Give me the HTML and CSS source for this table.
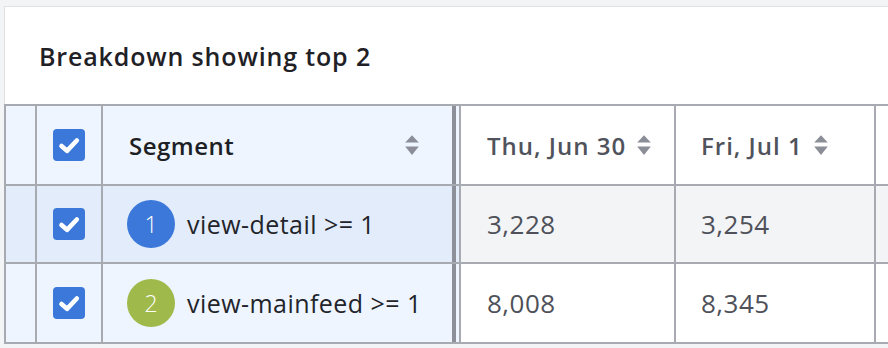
FILE: index.html
```html
<!DOCTYPE html>
<html>
<head>
<meta charset="utf-8">
<link rel="stylesheet" href="styles.css">
</head>
<body>
<div class="card">
  <div class="title">Breakdown showing top 2</div>
  <div class="table">
    <div class="row head">
      <div class="cell c-a"></div>
      <div class="cell c-b">
        <svg class="check" width="32" height="32" viewBox="0 0 32 32"><rect width="32" height="32" rx="4" fill="#3b78d9"/><path d="M8.5 17 L14 21.8 L23.8 11.5" fill="none" stroke="#fff" stroke-width="4.6" stroke-linecap="round" stroke-linejoin="round"/></svg>
      </div>
      <div class="cell c-seg seg-head">
        <span class="hlabel">Segment</span>
        <svg class="sort" width="14" height="20" viewBox="0 0 14 20"><path d="M7 0.3 L13.8 7.6 H0.2 Z" fill="#8b8e97"/><path d="M0.2 11.6 H13.8 L7 20 Z" fill="#8b8e97"/></svg>
      </div>
      <div class="cell c-thu date-head">
        <span>Thu, Jun 30</span>
        <svg class="sort" width="14" height="20" viewBox="0 0 14 20"><path d="M7 0.3 L13.8 7.6 H0.2 Z" fill="#8b8e97"/><path d="M0.2 11.6 H13.8 L7 20 Z" fill="#8b8e97"/></svg>
      </div>
      <div class="cell c-fri date-head">
        <span>Fri, Jul 1</span>
        <svg class="sort" width="14" height="20" viewBox="0 0 14 20"><path d="M7 0.3 L13.8 7.6 H0.2 Z" fill="#8b8e97"/><path d="M0.2 11.6 H13.8 L7 20 Z" fill="#8b8e97"/></svg>
      </div>
      <div class="cell c-rest"></div>
    </div>
    <div class="row r1">
      <div class="cell c-a"></div>
      <div class="cell c-b">
        <svg class="check" width="32" height="32" viewBox="0 0 32 32"><rect width="32" height="32" rx="4" fill="#3b78d9"/><path d="M8.5 17 L14 21.8 L23.8 11.5" fill="none" stroke="#fff" stroke-width="4.6" stroke-linecap="round" stroke-linejoin="round"/></svg>
      </div>
      <div class="cell c-seg seg-body">
        <span class="badge blue">1</span>
        <span class="segname">view-detail &gt;= 1</span>
      </div>
      <div class="cell c-thu num">3,228</div>
      <div class="cell c-fri num">3,254</div>
      <div class="cell c-rest"></div>
    </div>
    <div class="row r2">
      <div class="cell c-a"></div>
      <div class="cell c-b">
        <svg class="check" width="32" height="32" viewBox="0 0 32 32"><rect width="32" height="32" rx="4" fill="#3b78d9"/><path d="M8.5 17 L14 21.8 L23.8 11.5" fill="none" stroke="#fff" stroke-width="4.6" stroke-linecap="round" stroke-linejoin="round"/></svg>
      </div>
      <div class="cell c-seg seg-body">
        <span class="badge green">2</span>
        <span class="segname">view-mainfeed &gt;= 1</span>
      </div>
      <div class="cell c-thu num">8,008</div>
      <div class="cell c-fri num">8,345</div>
      <div class="cell c-rest"></div>
    </div>
  </div>
</div>
</body>
</html>
```
FILE: styles.css
```css
html, body {
  margin: 0;
  padding: 0;
}
body {
  width: 888px;
  height: 348px;
  overflow: hidden;
  background: #f3f4f6;
  font-family: "Open Sans", "Liberation Sans", sans-serif;
}
.card {
  margin: 6px 0 0 4px;
  background: #ffffff;
  border-top: 1px solid #e0e1e5;
}
.title {
  height: 97px;
  box-sizing: border-box;
  border-left: 1px solid #e0e1e5;
  padding-left: 34px;
  display: flex;
  align-items: center;
  font-size: 25px;
  font-weight: 600;
  letter-spacing: 0.85px;
  color: #1f2126;
}
.table {
  border-top: 2px solid #a8aab2;
  border-left: 2px solid #a8aab2;
  border-bottom: 2px solid #a8aab2;
}
.row {
  display: flex;
  background: #eef5ff;
}
.row + .row {
  border-top: 2px solid #a8aab2;
}
.head { height: 78px; }
.r1 { height: 76px; background: #e2ecfb; }
.r2 { height: 78px; }
.cell {
  box-sizing: border-box;
  display: flex;
  align-items: center;
  flex: none;
  border-right: 2px solid #a8aab2;
}
.c-a { width: 31px; }
.c-b { width: 66px; justify-content: center; }
.c-seg {
  width: 353px;
  border-right: 4px solid #8d9098;
}
.seg-head {
  padding-left: 26px;
  padding-right: 33px;
  justify-content: space-between;
}
.seg-body {
  padding-left: 24px;
}
.c-thu {
  width: 217px;
  margin-left: 3px;
  border-left: 2px solid #a8aab2;
  padding-left: 26px;
}
.c-fri {
  width: 200px;
  padding-left: 25px;
}
.c-rest {
  flex: 1;
  border-right: none;
}
.head .c-thu, .head .c-fri, .head .c-rest { background: #ffffff; }
.r1 .c-thu, .r1 .c-fri, .r1 .c-rest { background: #f3f4f6; }
.r2 .c-thu, .r2 .c-fri, .r2 .c-rest { background: #ffffff; }
.hlabel {
  font-size: 24px;
  font-weight: 600;
  color: #1d1f24;
  letter-spacing: 0.5px;
}
.date-head {
  font-size: 24px;
  font-weight: 600;
  color: #50535b;
  letter-spacing: 1px;
}
.date-head .sort {
  margin-left: 11px;
}
.badge {
  width: 48px;
  height: 48px;
  border-radius: 50%;
  display: flex;
  align-items: center;
  justify-content: center;
  color: #ffffff;
  font-size: 23px;
  font-weight: 300;
  flex: none;
}
.blue { background: #3b78d9; }
.green { background: #a0b94b; }
.segname {
  margin-left: 12px;
  font-size: 25px;
  color: #22242a;
  letter-spacing: 0.45px;
}
.num {
  font-size: 26px;
  color: #4e5159;
  letter-spacing: 0.5px;
}
.check { display: block; }
```
